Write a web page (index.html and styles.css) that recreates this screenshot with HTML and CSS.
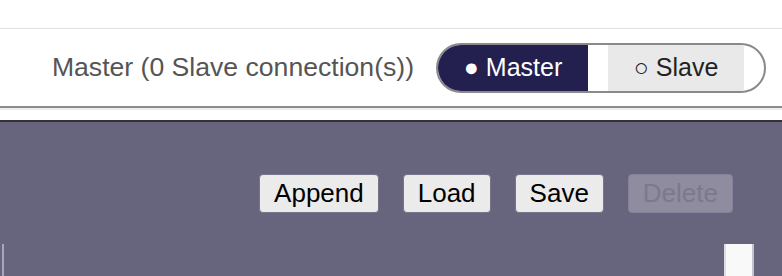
FILE: index.html
```html
<!DOCTYPE html>
<html lang="en">
<head>
    <meta charset="UTF-8">
    <meta name="viewport" content="width=device-width, initial-scale=1.0">
    <title>Master / Slave</title>
    <link rel="stylesheet" href="styles.css">
</head>
<body>
    <div class="topbar"></div>

    <div class="status-bar">
        <span class="status-text">Master (0 Slave connection(s))</span>
        <div class="mode-switch">
            <label class="mode-option active">● Master</label>
            <label class="mode-option slave">○ Slave</label>
        </div>
    </div>

    <div class="workspace">
        <div class="toolbar">
            <button class="tool-btn">Append</button>
            <button class="tool-btn">Load</button>
            <button class="tool-btn">Save</button>
            <button class="tool-btn" disabled>Delete</button>
        </div>

        <div class="panel">
            <div class="panel-body"></div>
            <div class="scroll-box"></div>
        </div>
    </div>
</body>
</html>
```

FILE: styles.css
```css
body {
    margin: 0;
    font-family: "Liberation Sans", Arial, sans-serif;
    background: white;
    height: 276px;
    display: flex;
    flex-direction: column;
    overflow: hidden;
}

.topbar {
    height: 28px;
    border-bottom: 1px solid #e0e0e0;
}

.status-bar {
    height: 77px;
    display: flex;
    align-items: center;
    justify-content: flex-end;
    gap: 22px;
    padding-right: 16px;
    border-bottom: 2px solid #8c8c8c;
    box-shadow: 0 2px 0 #ececec;
    margin-bottom: 12px;
}

.status-text {
    font-size: 26.6px;
    color: #555;
}

.mode-switch {
    display: flex;
    width: 330px;
    height: 50px;
    box-sizing: border-box;
    border: 2px solid #8a8a8a;
    border-radius: 25px;
    overflow: hidden;
}

.mode-option {
    display: flex;
    align-items: center;
    justify-content: center;
    font-size: 25px;
    margin-right: 20px;
    background: #e9e9e9;
    color: #222;
}

.mode-option.active {
    width: 150px;
    background: #23204f;
    color: white;
}

.mode-option.slave {
    width: 136px;
}

.workspace {
    flex: 1;
    background: #67657d;
    border-top: 2px solid #333;
    display: flex;
    flex-direction: column;
}

.toolbar {
    display: flex;
    justify-content: flex-end;
    gap: 24px;
    padding: 52px 49px 0 0;
}

.tool-btn {
    height: 39px;
    padding: 0 14px;
    font-family: "Liberation Sans", Arial, sans-serif;
    font-size: 26px;
    color: #000;
    background: #ebebeb;
    border: 1px solid #77758a;
    border-radius: 4px;
}

.tool-btn:disabled {
    color: #7b798c;
    background: #8f8c9f;
    border-color: #84829a;
}

.panel {
    flex: 1;
    display: flex;
    margin: 31px 28px 0 2px;
    border-left: 2px solid #a7a5b7;
}

.panel-body {
    flex: 1;
}

.scroll-box {
    width: 26px;
    background: #f9f9f9;
    border-left: 2px solid #dddde2;
    border-right: 2px solid #c4c3cb;
}
```
